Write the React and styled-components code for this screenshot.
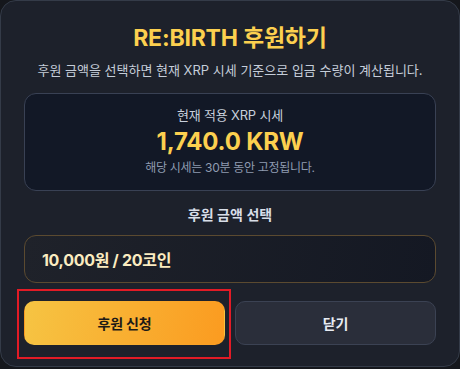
import React from 'react'
import styled, { createGlobalStyle } from 'styled-components'

const Global = createGlobalStyle`
  html, body {
    margin: 0;
    padding: 0;
    background: #15171c;
    font-family: Inter, "Noto Sans CJK KR", "Noto Sans", sans-serif;
  }
`

const Modal = styled.div`
  box-sizing: border-box;
  width: 460px;
  height: 367px;
  padding: 22px 23px 0;
  background: #1d212b;
  border: 1px solid #343b48;
  border-radius: 16px;
  display: flex;
  flex-direction: column;
  align-items: stretch;
`

const Title = styled.h1`
  margin: 0;
  text-align: center;
  font-size: 23px;
  font-weight: 700;
  color: #fcd04f;
  line-height: 30px;
  letter-spacing: -0.2px;
`

const Subtitle = styled.p`
  margin: 8px 0 0;
  text-align: center;
  font-size: 13px;
  color: #c5cdd9;
  line-height: 18px;
  letter-spacing: 0;
`

const RateCard = styled.div`
  margin-top: 14px;
  height: 98px;
  box-sizing: border-box;
  background: #121826;
  border: 1px solid #394154;
  border-radius: 12px;
  display: flex;
  flex-direction: column;
  align-items: center;
  padding-top: 12px;
`

const RateLabel = styled.div`
  font-size: 13px;
  color: #c7cfdb;
  line-height: 18px;
  letter-spacing: -0.2px;
`

const RateValue = styled.div`
  margin-top: 3px;
  font-size: 24px;
  font-weight: 700;
  color: #fcd04f;
  line-height: 30px;
  letter-spacing: -0.2px;
`

const RateNote = styled.div`
  margin-top: 3px;
  font-size: 12px;
  color: #8f9bb0;
  line-height: 16px;
  letter-spacing: -0.3px;
`

const SectionLabel = styled.div`
  margin-top: 14px;
  text-align: center;
  font-size: 14px;
  font-weight: 600;
  color: #d8dee8;
  line-height: 20px;
`

const Select = styled.div`
  margin-top: 10px;
  height: 48px;
  box-sizing: border-box;
  border: 1px solid #5b4a30;
  border-radius: 12px;
  background: linear-gradient(100deg, #1f222a 0%, #141823 100%);
  display: flex;
  align-items: center;
  padding-left: 17px;
  font-size: 16px;
  font-weight: 700;
  color: #fbecc0;
  letter-spacing: -0.3px;
`

const ButtonRow = styled.div`
  margin-top: 18px;
  display: grid;
  grid-template-columns: 1fr 1fr;
  gap: 10px;
`

const Highlight = styled.div`
  position: relative;
  &::after {
    content: '';
    position: absolute;
    left: -7px;
    top: -12px;
    right: -6px;
    bottom: -14px;
    border: 2px solid #e21b26;
    pointer-events: none;
  }
`

const Button = styled.button`
  width: 100%;
  height: 44px;
  border-radius: 10px;
  font-family: inherit;
  font-size: 14px;
  font-weight: 700;
  cursor: pointer;
  letter-spacing: -0.2px;
  border: 1px solid ${p => (p.$primary ? 'transparent' : '#3b4253')};
  background: ${p =>
    p.$primary ? 'linear-gradient(100deg, #f6c443 0%, #fb9b20 100%)' : '#2a2e3a'};
  color: ${p => (p.$primary ? '#1c1a17' : '#e8ecf3')};
`

export default function App() {
  return (
    <>
      <Global />
      <Modal>
        <Title>RE:BIRTH 후원하기</Title>
        <Subtitle>후원 금액을 선택하면 현재 XRP 시세 기준으로 입금 수량이 계산됩니다.</Subtitle>
        <RateCard>
          <RateLabel>현재 적용 XRP 시세</RateLabel>
          <RateValue>1,740.0 KRW</RateValue>
          <RateNote>해당 시세는 30분 동안 고정됩니다.</RateNote>
        </RateCard>
        <SectionLabel>후원 금액 선택</SectionLabel>
        <Select>10,000원 / 20코인</Select>
        <ButtonRow>
          <Highlight>
            <Button $primary>후원 신청</Button>
          </Highlight>
          <Button>닫기</Button>
        </ButtonRow>
      </Modal>
    </>
  )
}
